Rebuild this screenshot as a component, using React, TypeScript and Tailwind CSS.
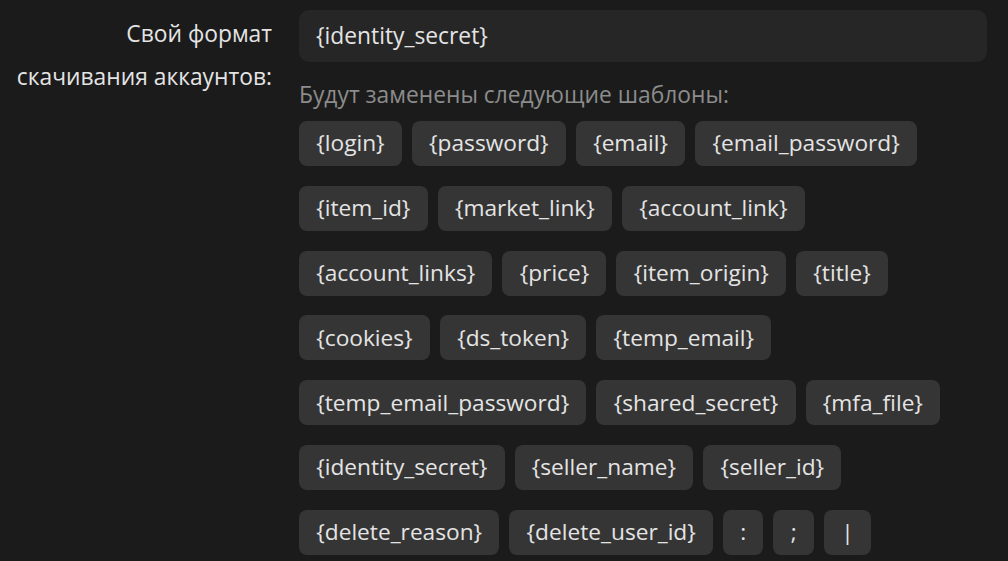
import React from "react";

const chips = [
  "{login}", "{password}", "{email}", "{email_password}",
  "{item_id}", "{market_link}", "{account_link}",
  "{account_links}", "{price}", "{item_origin}", "{title}",
  "{cookies}", "{ds_token}", "{temp_email}",
  "{temp_email_password}", "{shared_secret}", "{mfa_file}",
  "{identity_secret}", "{seller_name}", "{seller_id}",
  "{delete_reason}", "{delete_user_id}", ":", ";", "|",
];

export default function App() {
  return (
    <div
      className="w-[1008px] h-[561px] overflow-hidden bg-[#1b1b1b] text-[#e4e4e4] flex"
      style={{ fontFamily: '"Open Sans", sans-serif' }}
    >
      <div className="w-[272px] shrink-0 text-right text-[22.8px] leading-[43px] pt-[12px]">
        Свой формат
        <br />
        скачивания аккаунтов:
      </div>
      <div className="ml-[27px] w-[688px] pt-[10px]">
        <div className="h-[52px] rounded-[10px] bg-[#262626] flex items-center px-[17px] text-[22.8px]">
          {"{identity_secret}"}
        </div>
        <div className="mt-[17px] text-[22.8px] leading-[32px] text-[#8c8c8c]">Будут заменены следующие шаблоны:</div>
        <div className="mt-[10px] flex flex-wrap gap-x-[10px] gap-y-[19.8px] w-[660px]">
          {chips.map((c) => (
            <div
              key={c}
              className="h-[45px] rounded-[8px] bg-[#353535] px-[17.25px] flex items-center text-[22.7px]"
            >
              {c}
            </div>
          ))}
        </div>
      </div>
    </div>
  );
}
